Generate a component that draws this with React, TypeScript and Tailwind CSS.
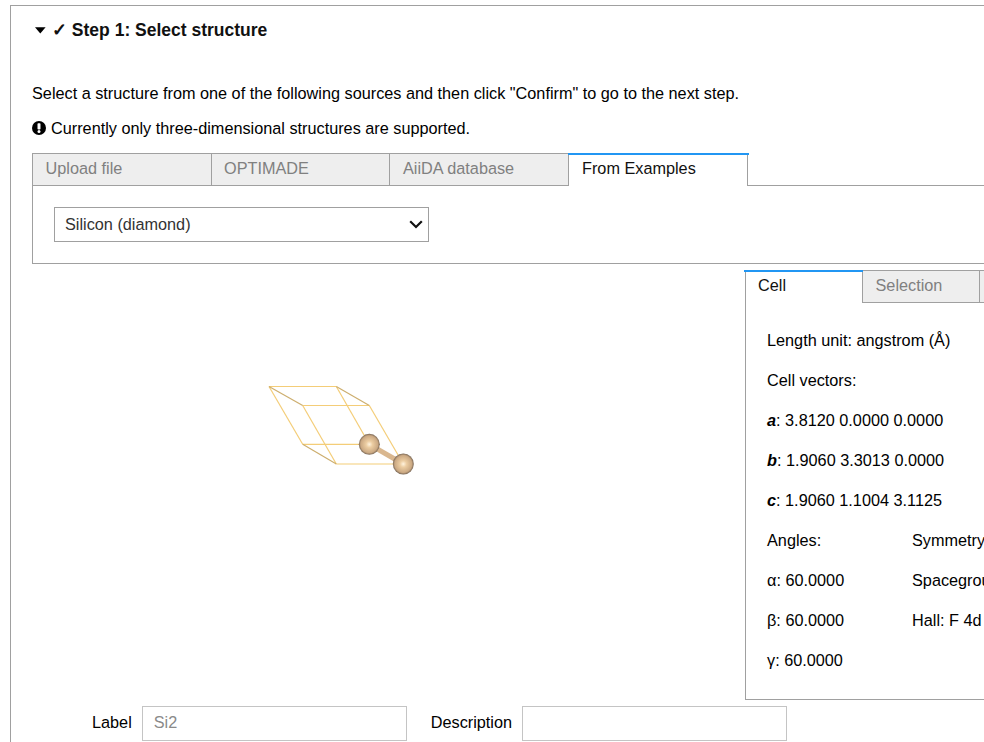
const font = { fontFamily: '"Liberation Sans", Arial, sans-serif' };

function Structure() {
  const pts: Record<string, [number, number]> = {
    A: [19, 16.5], B: [86.3, 16.5], C: [52.7, 35.5], D: [119.3, 35.5],
    E: [52.7, 74.3], F: [119.3, 74.3], G: [86.3, 94], H: [153.3, 94],
  };
  const light = ["AB", "CD", "EF", "GH", "AE", "CG", "BF", "DH"];
  const dark = ["AC", "BD", "EG"];
  const line = (e: string, c: string) => (
    <line key={e} x1={pts[e[0]][0]} y1={pts[e[0]][1]} x2={pts[e[1]][0]} y2={pts[e[1]][1]} stroke={c} strokeWidth="1.2" />
  );
  return (
    <svg width="180" height="110" viewBox="0 0 180 110" className="block">
      <defs>
        <radialGradient id="si" cx="50%" cy="50%" r="52%">
          <stop offset="0%" stopColor="#fff3de" />
          <stop offset="30%" stopColor="#eccda2" />
          <stop offset="78%" stopColor="#cba983" />
          <stop offset="100%" stopColor="#66574a" />
        </radialGradient>
      </defs>
      {light.map((e) => line(e, "#f4cd78"))}
      {dark.map((e) => line(e, "#cdae6e"))}
      <line x1="119.3" y1="74.3" x2="153.3" y2="94" stroke="#d9b78f" strokeWidth="5" />
      <circle cx="119.3" cy="74.3" r="10.5" fill="url(#si)" />
      <circle cx="153.3" cy="94" r="10.5" fill="url(#si)" />
    </svg>
  );
}

const rowCls = "h-10 flex items-center";

export default function App() {
  return (
    <div style={font} className="w-[984px] h-[742px] overflow-hidden bg-white text-[#000] pt-[5px] pl-[10px] text-[16.25px]">
      <div className="w-[1100px] h-[800px] border-l border-t border-[#a0a0a0] pl-[21px]">
        <div className="h-[48px] flex items-center text-[17.5px] font-bold text-[#111]">
          <svg width="11" height="7" viewBox="0 0 11 7" className="ml-[3px] mr-[6px]">
            <path d="M0 0.2h10.6L5.3 6.6z" fill="#000" />
          </svg>
          <span>✓ Step 1: Select structure</span>
        </div>
        <p className="mt-[27px] h-[24px] leading-[24px]">
          Select a structure from one of the following sources and then click "Confirm" to go to the next step.
        </p>
        <p className="mt-[11px] h-[24px] leading-[24px] flex items-center">
          <svg width="14" height="14" viewBox="0 0 14 14" className="mr-[5px]">
            <circle cx="7" cy="7" r="7" fill="#000" />
            <rect x="5.5" y="2.2" width="3" height="6.4" rx="0.8" fill="#fff" />
            <circle cx="7" cy="10.6" r="1.5" fill="#fff" />
          </svg>
          Currently only three-dimensional structures are supported.
        </p>

        <div className="mt-[13px] flex h-[33px] relative z-10">
          <div className="w-[180px] h-[33px] pl-[12.5px] pb-[2px] flex items-center bg-[#eeeeee] text-[#808080] border border-[#a0a0a0]">
            Upload file
          </div>
          <div className="w-[179px] -ml-px h-[33px] pl-[12px] pb-[2px] flex items-center bg-[#eeeeee] text-[#808080] border border-[#a0a0a0]">
            OPTIMADE
          </div>
          <div className="w-[180px] -ml-px h-[33px] pl-[13px] pb-[2px] flex items-center bg-[#eeeeee] text-[#808080] border border-[#a0a0a0]">
            AiiDA database
          </div>
          <div className="relative w-[180px] -ml-px h-[33px] pl-[13px] pb-[2px] flex items-center bg-white border-x border-[#a0a0a0] text-[#111]">
            <div className="absolute top-0 -left-px -right-[2px] h-[2px] bg-[#2196f3]" />
            From Examples
          </div>
        </div>
        <div className="-mt-px h-[79px] w-[1000px] border border-[#a0a0a0] pt-[21px] pl-[21px]">
          <div className="relative w-[375px] h-[35px]">
            <select className="block w-full h-full appearance-none bg-white border border-[#a0a0a0] pl-[10px] text-[#333] rounded-none outline-none">
              <option>Silicon (diamond)</option>
            </select>
            <svg width="14" height="9" viewBox="0 0 14 9" className="absolute right-[6px] top-[13px] pointer-events-none">
              <path d="M1.2 1.2L7 7l5.8-5.8" fill="none" stroke="#111" strokeWidth="2.2" />
            </svg>
          </div>
        </div>

        <div className="flex mt-[6px]">
          <div className="w-[713px] shrink-0 pt-[100px] pl-[218px]">
            <Structure />
          </div>
          <div className="w-[500px] shrink-0">
            <div className="flex h-[33px] relative z-10">
              <div className="relative w-[118px] shrink-0 h-[33px] pl-[12px] pb-[3px] flex items-center bg-white border-x border-[#a0a0a0] text-[#111]">
                <div className="absolute top-0 -left-[2px] -right-px h-[2px] bg-[#2196f3]" />
                Cell
              </div>
              <div className="w-[118px] shrink-0 -ml-px h-[33px] pl-[12.5px] pb-[3px] flex items-center bg-[#eeeeee] text-[#808080] border border-[#a0a0a0]">
                Selection
              </div>
              <div className="w-[100px] shrink-0 -ml-px h-[33px] bg-[#eeeeee] border border-[#a0a0a0]" />
            </div>
            <div className="-mt-px h-[398px] border border-[#a0a0a0] pl-[21px] pt-[17px]">
              <div className={rowCls}>Length unit: angstrom (Å)</div>
              <div className={rowCls}>Cell vectors:</div>
              <div className={rowCls}><span><b><i>a</i></b>: 3.8120 0.0000 0.0000</span></div>
              <div className={rowCls}><span><b><i>b</i></b>: 1.9060 3.3013 0.0000</span></div>
              <div className={rowCls}><span><b><i>c</i></b>: 1.9060 1.1004 3.1125</span></div>
              <div className="flex">
                <div className="w-[145px] shrink-0">
                  <div className={rowCls}>Angles:</div>
                  <div className={rowCls}>α: 60.0000</div>
                  <div className={rowCls}>β: 60.0000</div>
                  <div className={rowCls}>γ: 60.0000</div>
                </div>
                <div className="whitespace-nowrap">
                  <div className={rowCls}>Symmetry information</div>
                  <div className={rowCls}>Spacegroup: Fd-3m</div>
                  <div className={rowCls}>Hall: F 4d 2 3 -1d</div>
                </div>
              </div>
            </div>
          </div>
        </div>

        <div className="flex items-center mt-[6px] ml-[60px]">
          <span className="pb-[2px]">Label</span>
          <input readOnly value="Si2" className="ml-[10px] w-[265px] h-[35px] border border-[#c4c4c4] pl-[11px] pb-[2px] text-[#8a8a8a] outline-none" />
          <span className="ml-[24px] pb-[2px]">Description</span>
          <input readOnly value="" className="ml-[10px] w-[265px] h-[35px] border border-[#c4c4c4] outline-none" />
        </div>
      </div>
    </div>
  );
}
